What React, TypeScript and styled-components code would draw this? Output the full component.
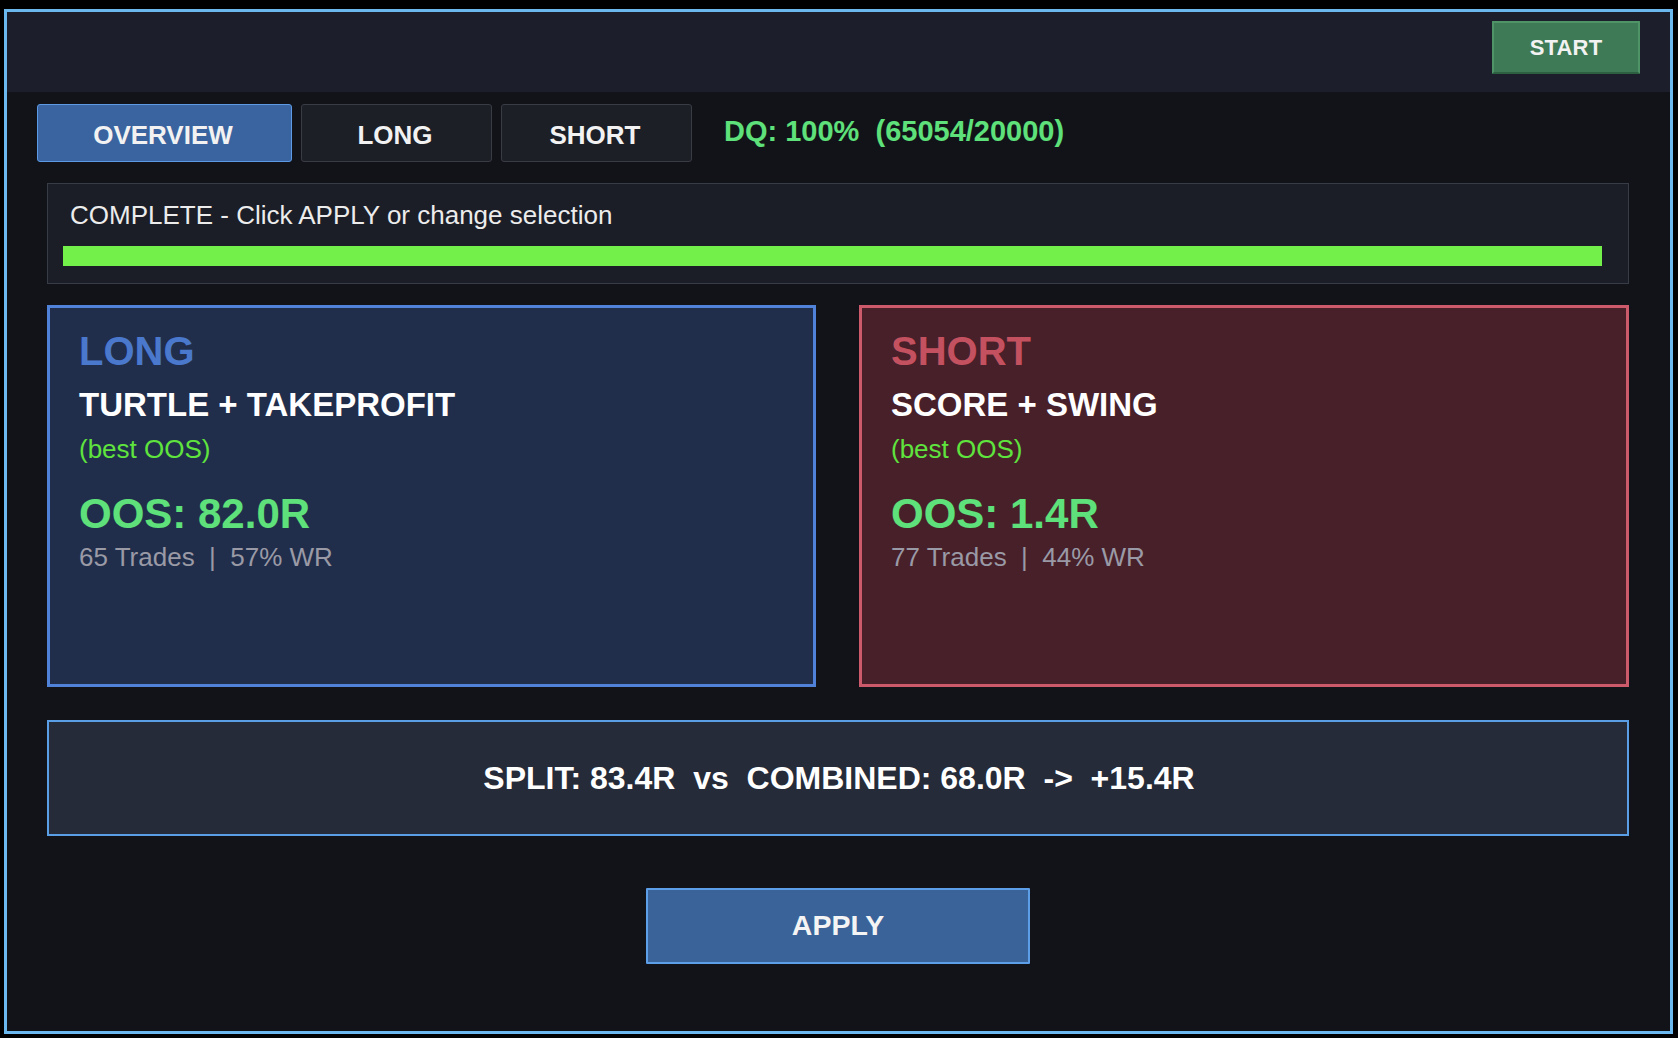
import React from "react";
import styled, { createGlobalStyle } from "styled-components";

const Global = createGlobalStyle`
  html, body { margin: 0; padding: 0; background: #000; }
  body { font-family: "Liberation Sans", Arial, sans-serif; }
  * { box-sizing: border-box; }
`;

const Page = styled.div`
  width: 1678px;
  height: 1038px;
  padding: 9px 5px 4px 4px;
  background: #000;
`;

const Frame = styled.div`
  width: 1669px;
  height: 1025px;
  border: 3px solid #6ab8ee;
  background: #121318;
  display: flex;
  flex-direction: column;
`;

const Header = styled.header`
  height: 80px;
  background: #1c1f2b;
  display: flex;
  justify-content: flex-end;
  align-items: flex-start;
  padding: 9px 30px 0 0;
`;

const StartButton = styled.button`
  width: 148px;
  height: 53px;
  background: #3e7a55;
  border: 2px solid #4f9466;
  border-bottom-color: #2d6040;
  border-radius: 1px;
  color: #f2f2f2;
  font-family: "Liberation Sans", Arial, sans-serif;
  font-weight: 700;
  font-size: 22px;
  letter-spacing: 0.2px;
  padding: 0;
`;

const Body = styled.main`
  display: flex;
  flex-direction: column;
  padding: 12px 41px 0 40px;
`;

const TabRow = styled.div`
  display: flex;
  align-items: center;
  gap: 9px;
  margin-left: -10px;
  height: 58px;
`;

const Tab = styled.button<{ $active?: boolean; $w: number }>`
  width: ${(p) => p.$w}px;
  height: 58px;
  border-radius: 3px;
  border: 1.5px solid ${(p) => (p.$active ? "#5c9ae6" : "#3a3c45")};
  background: ${(p) => (p.$active ? "#3a64a0" : "#1d1f27")};
  color: #f2f2f2;
  font-family: "Liberation Sans", Arial, sans-serif;
  font-weight: 700;
  font-size: 26px;
  padding: 4px 0 0 0;
  text-indent: -3px;
`;

const DQ = styled.div`
  margin-left: 23px;
  margin-bottom: 4px;
  color: #5ee07a;
  font-weight: 700;
  font-size: 29px;
  white-space: pre;
`;

const StatusPanel = styled.section`
  margin-top: 21px;
  height: 101px;
  background: #1b1e27;
  border: 1px solid #383c47;
  padding: 16px 26px 0 15px;
`;

const StatusText = styled.div`
  color: #ececec;
  font-size: 26px;
  line-height: 30px;
  padding-left: 7px;
`;

const ProgressTrack = styled.div`
  margin-top: 16px;
  height: 20px;
  background: #2a2d36;
`;

const ProgressFill = styled.div`
  height: 100%;
  background: #74f04a;
`;

const CardRow = styled.div`
  margin-top: 21px;
  display: grid;
  grid-template-columns: 769px 770px;
  column-gap: 43px;
`;

const Card = styled.section<{ $tone: "long" | "short" }>`
  height: 382px;
  border: 3px solid ${(p) => (p.$tone === "long" ? "#4f82d8" : "#cc5a6a")};
  background: ${(p) => (p.$tone === "long" ? "#212e4b" : "#48202a")};
  padding: 20px 27px 0 29px;
  display: flex;
  flex-direction: column;
`;

const CardTitle = styled.div<{ $tone: "long" | "short" }>`
  color: ${(p) => (p.$tone === "long" ? "#4a78cc" : "#c4515f")};
  font-weight: 700;
  font-size: 40px;
  line-height: 46px;
`;

const Strategy = styled.div`
  margin-top: 12px;
  color: #ffffff;
  font-weight: 700;
  font-size: 33px;
  line-height: 38px;
`;

const BestTag = styled.div`
  margin-top: 10px;
  color: #5fe43e;
  font-size: 26px;
  line-height: 30px;
`;

const Oos = styled.div`
  margin-top: 26px;
  color: #5ee07a;
  font-weight: 700;
  font-size: 42px;
  line-height: 48px;
`;

const Stats = styled.div`
  margin-top: 4px;
  color: #9a9aa6;
  font-size: 26px;
  line-height: 30px;
  white-space: pre;
`;

const SplitBox = styled.section`
  margin-top: 33px;
  height: 116px;
  border: 2px solid #5a9ee6;
  background: #252b38;
  display: flex;
  align-items: center;
  justify-content: center;
  color: #ffffff;
  font-weight: 700;
  font-size: 32px;
  white-space: pre;
  padding-left: 2px;
`;

const ApplyRow = styled.div`
  margin-top: 52px;
  display: flex;
  justify-content: center;
`;

const ApplyButton = styled.button`
  width: 384px;
  height: 76px;
  background: #3a6399;
  border: 2px solid #5c9ee8;
  border-radius: 1px;
  color: #f4f4f4;
  font-family: "Liberation Sans", Arial, sans-serif;
  font-weight: 700;
  font-size: 28.5px;
  padding: 0 0 2px 0;
`;

type Side = {
  tone: "long" | "short";
  title: string;
  strategy: string;
  oos: string;
  stats: string;
};

const sides: Side[] = [
  {
    tone: "long",
    title: "LONG",
    strategy: "TURTLE + TAKEPROFIT",
    oos: "OOS: 82.0R",
    stats: "65 Trades  |  57% WR",
  },
  {
    tone: "short",
    title: "SHORT",
    strategy: "SCORE + SWING",
    oos: "OOS: 1.4R",
    stats: "77 Trades  |  44% WR",
  },
];

export default function App() {
  return (
    <Page>
      <Global />
      <Frame>
        <Header>
          <StartButton>START</StartButton>
        </Header>
        <Body>
          <TabRow>
            <Tab $active $w={255}>OVERVIEW</Tab>
            <Tab $w={191}>LONG</Tab>
            <Tab $w={191}>SHORT</Tab>
            <DQ>{"DQ: 100%  (65054/20000)"}</DQ>
          </TabRow>
          <StatusPanel>
            <StatusText>COMPLETE - Click APPLY or change selection</StatusText>
            <ProgressTrack>
              <ProgressFill style={{ width: "100%" }} />
            </ProgressTrack>
          </StatusPanel>
          <CardRow>
            {sides.map((s) => (
              <Card key={s.tone} $tone={s.tone}>
                <CardTitle $tone={s.tone}>{s.title}</CardTitle>
                <Strategy>{s.strategy}</Strategy>
                <BestTag>(best OOS)</BestTag>
                <Oos>{s.oos}</Oos>
                <Stats>{s.stats}</Stats>
              </Card>
            ))}
          </CardRow>
          <SplitBox>{"SPLIT: 83.4R  vs  COMBINED: 68.0R  ->  +15.4R"}</SplitBox>
          <ApplyRow>
            <ApplyButton>APPLY</ApplyButton>
          </ApplyRow>
        </Body>
      </Frame>
    </Page>
  );
}
